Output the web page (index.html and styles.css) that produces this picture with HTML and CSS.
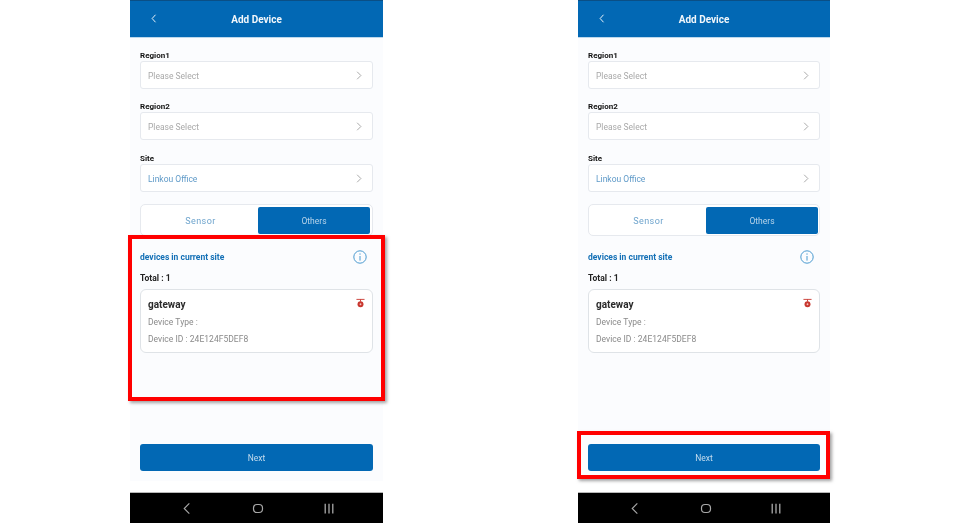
FILE: index.html
```html
<!DOCTYPE html>
<html lang="en">
<head>
<meta charset="utf-8">
<title>Add Device</title>
<link rel="stylesheet" href="styles.css">
</head>
<body>
<div class="stage">
  <section class="phone phone-a">
    <header class="appbar">
      <svg class="back" viewBox="0 0 8 12"><path d="M6 1 1.5 6 6 11"/></svg>
      <h1 class="title">Add Device</h1>
    </header>
    <main class="content">
      <div class="field"><div class="label">Region1</div><div class="select"><span class="ph">Please Select</span><svg class="chev" viewBox="0 0 8 12"><path d="M1.5 1 6.5 6 1.5 11"/></svg></div></div>
      <div class="field"><div class="label">Region2</div><div class="select"><span class="ph">Please Select</span><svg class="chev" viewBox="0 0 8 12"><path d="M1.5 1 6.5 6 1.5 11"/></svg></div></div>
      <div class="field"><div class="label">Site</div><div class="select"><span class="val">Linkou Office</span><svg class="chev" viewBox="0 0 8 12"><path d="M1.5 1 6.5 6 1.5 11"/></svg></div></div>
      <div class="tabs"><div class="tab">Sensor</div><div class="tab tab-on">Others</div></div>
      <div class="sec-head"><span class="sec-title">devices in current site</span>
        <svg class="info" viewBox="0 0 14 14"><circle cx="7" cy="7" r="6.2"/><path d="M7 6v4.6M7 3.4v1.3"/></svg></div>
      <div class="total">Total : 1</div>
      <article class="card">
        <div class="card-top"><span class="name">gateway</span>
          <svg class="del" viewBox="0 0 10 10"><path class="del-bar" d="M0.5 1h9M5 1v2.5"/><circle class="del-dot" cx="5" cy="6.4" r="3.300"/><circle class="del-hole" cx="5" cy="6.4" r="1"/></svg></div>
        <div class="meta">Device Type :</div>
        <div class="meta">Device ID : 24E124F5DEF8</div>
      </article>
      <button class="next">Next</button>
    </main>
    <div class="strip"></div>
    <nav class="sysnav">
      <svg class="nav-ico" viewBox="0 0 10 14"><path d="M7.5 1.5 2 7l5.500 5.500"/></svg>
      <svg class="nav-ico" viewBox="0 0 12 12"><rect x="1.500" y="2" width="9" height="8" rx="3.500"/></svg>
      <svg class="nav-ico" viewBox="0 0 10 12"><path d="M1.500 1.500v9M5 1.500v9M8.500 1.500v9"/></svg>
    </nav>
    <div class="mark mark-a"></div>
  </section>

  <section class="phone phone-b">
    <header class="appbar">
      <svg class="back" viewBox="0 0 8 12"><path d="M6 1 1.5 6 6 11"/></svg>
      <h1 class="title">Add Device</h1>
    </header>
    <main class="content">
      <div class="field"><div class="label">Region1</div><div class="select"><span class="ph">Please Select</span><svg class="chev" viewBox="0 0 8 12"><path d="M1.5 1 6.5 6 1.5 11"/></svg></div></div>
      <div class="field"><div class="label">Region2</div><div class="select"><span class="ph">Please Select</span><svg class="chev" viewBox="0 0 8 12"><path d="M1.5 1 6.5 6 1.5 11"/></svg></div></div>
      <div class="field"><div class="label">Site</div><div class="select"><span class="val">Linkou Office</span><svg class="chev" viewBox="0 0 8 12"><path d="M1.5 1 6.5 6 1.5 11"/></svg></div></div>
      <div class="tabs"><div class="tab">Sensor</div><div class="tab tab-on">Others</div></div>
      <div class="sec-head"><span class="sec-title">devices in current site</span>
        <svg class="info" viewBox="0 0 14 14"><circle cx="7" cy="7" r="6.2"/><path d="M7 6v4.6M7 3.4v1.3"/></svg></div>
      <div class="total">Total : 1</div>
      <article class="card">
        <div class="card-top"><span class="name">gateway</span>
          <svg class="del" viewBox="0 0 10 10"><path class="del-bar" d="M0.5 1h9M5 1v2.5"/><circle class="del-dot" cx="5" cy="6.4" r="3.300"/><circle class="del-hole" cx="5" cy="6.4" r="1"/></svg></div>
        <div class="meta">Device Type :</div>
        <div class="meta">Device ID : 24E124F5DEF8</div>
      </article>
      <button class="next">Next</button>
    </main>
    <div class="strip"></div>
    <nav class="sysnav">
      <svg class="nav-ico" viewBox="0 0 10 14"><path d="M7.5 1.5 2 7l5.500 5.500"/></svg>
      <svg class="nav-ico" viewBox="0 0 12 12"><rect x="1.500" y="2" width="9" height="8" rx="3.500"/></svg>
      <svg class="nav-ico" viewBox="0 0 10 12"><path d="M1.500 1.500v9M5 1.500v9M8.500 1.500v9"/></svg>
    </nav>
    <div class="mark mark-b"></div>
  </section>
</div>
</body>
</html>
```

FILE: styles.css
```css
* { box-sizing: border-box; }
html, body { margin: 0; height: 100%; background: #fff; overflow: hidden; }
body { font-family: Roboto, "Liberation Sans", sans-serif; }
.stage { display: flex; padding-left: 130px; gap: 195px; height: 523px; }
.phone { position: relative; width: 253px; height: 523px; display: flex; flex-direction: column; }
.phone-b { width: 252px; }

.appbar { height: 38px; flex: none; background: #0268b4; border-top: 1px solid #0a4f86; border-bottom: 1px solid #bcd8ec; position: relative; display: flex; align-items: center; justify-content: center; filter: blur(.3px); }
.back { width: 6px; height: 9px; position: absolute; left: 21px; top: 13px; fill: none; stroke: #eef5fb; stroke-width: 1.300; }
.title { margin: 0; font-size: 10px; font-weight: 700; color: #f2f7fb; }

.content { flex: none; height: 443px; background: #fbfcfe; padding: 11px 10px 0; display: flex; flex-direction: column; filter: blur(.3px); }
.field { margin-bottom: 11px; }
.field + .field { margin-bottom: 12px; }
.label { font-size: 8px; height: 12px; padding-top: 1px; line-height: 11px; font-weight: 700; color: #111; }
.select { height: 28px; background: #fff; border: 1px solid #e6e9ee; border-radius: 3px; display: flex; align-items: center; justify-content: space-between; padding: 1px 10px 0 7px; font-size: 8.500px; }
.ph { color: #a9a9a9; }
.val { color: #5f9ac8; }
.chev { width: 6px; height: 9px; fill: none; stroke: #8f8f8f; stroke-width: 1; }

.tabs { height: 32px; background: #fff; border: 1px solid #e6e9ee; border-radius: 5px; padding: 2px 2px 1px; display: flex; }
.phone-b .tabs { padding-right: 1px; }
.tab { flex: 1; display: flex; align-items: center; justify-content: center; font-size: 9px; letter-spacing: .4px; color: #6ea4cd; border-radius: 2px; }
.tab-on { flex: none; width: 112px; font-size: 8.500px; letter-spacing: 0; background: #0268b4; color: #b8d4ea; }

.sec-head { display: flex; align-items: center; justify-content: space-between; margin-top: 13px; height: 16px; padding-right: 6px; }
.sec-title { font-size: 8.500px; font-weight: 700; color: #1470b6; }
.info { width: 14px; height: 14px; fill: none; stroke: #4a9ad0; stroke-width: 1; }
.total { font-size: 8.500px; font-weight: 700; line-height: 12px; color: #222; margin-top: 7px; }

.card { margin-top: 5px; height: 64px; background: #fff; border: 1.500px solid #dfe3e7; border-radius: 6px; padding: 7px 7px 0 7px; }
.card-top { display: flex; align-items: flex-start; justify-content: space-between; height: 16.500px; }
.name { font-size: 10px; font-weight: 700; color: #2a2a2a; line-height: 16px; }
.del { width: 9px; height: 10px; margin: 1px 0 0; }
.del-bar { fill: none; stroke: #c8372f; stroke-width: 1; }
.del-dot { fill: #c8372f; }
.del-hole { fill: #f3c4c0; }
.meta { font-size: 8.500px; line-height: 17.500px; letter-spacing: .03px; color: #8a8a8a; }

.next { margin-top: auto; margin-bottom: 10px; height: 27px; flex: none; background: #0268b4; color: #c4dcee; border: 0; border-radius: 3px; font: 400 8.500px Roboto, "Liberation Sans", sans-serif; }

.strip { flex: 1; background: #fff; border-bottom: 1px solid #b8b8b8; height: 12px; }
.sysnav { flex: none; height: 30px; background: #000; display: flex; align-items: center; justify-content: space-between; padding: 0 48px 0 51px; }
.nav-ico { width: 12px; height: 13px; fill: none; stroke: #a8a8a8; stroke-width: 1.200; }

.mark { position: absolute; border: 4px solid #f00; box-shadow: 2px 2px 3px rgba(90, 90, 90, .55); }
.mark-a { left: -2px; top: 235px; width: 257px; height: 166px; }
.mark-b { left: -1px; top: 431px; width: 253px; height: 48px; }
```
